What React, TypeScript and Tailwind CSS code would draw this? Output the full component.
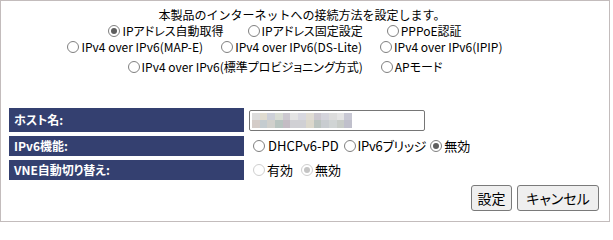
import React from 'react';

// blurred host name, drawn as a mosaic of two rows
const mosaic = [
  ['#dcdcdc', '#e0dcd0', '#cdd0d8', '#d8dcd4', '#ccc8d0', '#e4e4e4', '#d8d8e0', '#e0dcd4', '#ccc8d0', '#d4d4dc', '#dcdcdc', '#e4e4e4', '#c8c8d4'],
  ['#d4ccc8', '#c4ccd0', '#d0d0cc', '#b8c4c0', '#c4bcc4', '#d0d0d4', '#d0d0d4', '#dcd8cc', '#bcc4c0', '#c8ccd0', '#d0d4d4', '#c8ccc8', '#c0c0cc'],
];

function Radio({ checked = false, disabled = false }: { checked?: boolean; disabled?: boolean }) {
  return (
    <span
      className={
        'inline-flex size-[12px] shrink-0 items-center justify-center rounded-full border bg-white ' +
        (disabled ? 'border-[#cfcfcf]' : 'border-[#808080]')
      }
    >
      {checked && (
        <span className={'size-[6px] rounded-full ' + (disabled ? 'bg-[#c4c4c4]' : 'bg-[#5e5e5e]')} />
      )}
    </span>
  );
}

function Choice({ label, checked, className = '' }: { label: string; checked?: boolean; className?: string }) {
  return (
    <span className={'flex items-center gap-[2px] ' + className}>
      <Radio checked={checked} />
      <span>{label}</span>
    </span>
  );
}

function Label({ text, tall }: { text: string; tall?: boolean }) {
  return (
    <div
      className={
        'flex w-[235px] items-center bg-[#344070] pl-[5px] text-[12px] font-bold text-white ' +
        (tall ? 'h-[24px]' : 'h-[20px]')
      }
    >
      {text}
    </div>
  );
}

export default function App() {
  return (
    <div className="h-[222px] w-[610px] border border-[#c3bcbc] bg-white font-['Noto_Sans_CJK_JP',sans-serif] text-black [font-feature-settings:'palt']">
      {/* connection method */}
      <div className="pt-[6px] text-[12px] leading-[16px]">
        <div className="pr-[6px] text-center [font-feature-settings:normal]">本製品のインターネットへの接続方法を設定します。</div>
        <div className="flex h-[16px] justify-center gap-[24px] pr-[40px]">
          <Choice label="IPアドレス自動取得" checked />
          <Choice label="IPアドレス固定設定" />
          <Choice label="PPPoE認証" />
        </div>
        <div className="flex h-[16px] justify-center gap-[18px] pr-[40px]">
          <Choice label="IPv4 over IPv6(MAP-E)" />
          <Choice label="IPv4 over IPv6(DS-Lite)" />
          <Choice label="IPv4 over IPv6(IPIP)" />
        </div>
        <div className="mt-[4px] flex h-[16px] justify-center gap-[18px] pr-[40px]">
          <Choice label="IPv4 over IPv6(標準プロビジョニング方式)" />
          <Choice label="APモード" />
        </div>
      </div>

      {/* settings table */}
      <div className="mt-[33px] flex flex-col gap-[4px] pl-[8px]">
        <div className="flex items-center gap-[5px]">
          <Label text="ホスト名:" tall />
          <div className="flex h-[21px] w-[176px] flex-col rounded-[2px] border border-[#767676] px-[2px] pt-[2px]">
            {mosaic.map((row, r) => (
              <div key={r} className="flex">
                {row.map((c, i) => (
                  <span key={i} className="h-[7.5px] w-[7.7px]" style={{ backgroundColor: c }} />
                ))}
              </div>
            ))}
          </div>
        </div>
        <div className="flex items-center gap-[5px]">
          <Label text="IPv6機能:" />
          <div className="flex items-center pl-[4px] text-[13px]">
            <Radio />
            <span className="ml-[3px] mr-[5px]">DHCPv6-PD</span>
            <Radio />
            <span className="ml-[2px] mr-[4px] tracking-[-0.3px]">IPv6ブリッジ</span>
            <Radio checked />
            <span className="ml-[2px]">無効</span>
          </div>
        </div>
        <div className="flex items-center gap-[5px]">
          <Label text="VNE自動切り替え:" />
          <div className="flex items-center pl-[4px] text-[13px] text-black">
            <Radio disabled />
            <span className="ml-[2px] mr-[8px]">有効</span>
            <Radio checked disabled />
            <span className="ml-[2px]">無効</span>
          </div>
        </div>
      </div>

      {/* buttons */}
      <div className="mt-[5px] flex justify-end gap-[5px] pr-[10px]">
        <button className="h-[26px] w-[41px] rounded-[3px] border border-[#7a7a7a] bg-[#efefef] text-[14px]">設定</button>
        <button className="h-[26px] w-[82px] rounded-[3px] border border-[#7a7a7a] bg-[#efefef] text-[14px]">キャンセル</button>
      </div>
    </div>
  );
}
